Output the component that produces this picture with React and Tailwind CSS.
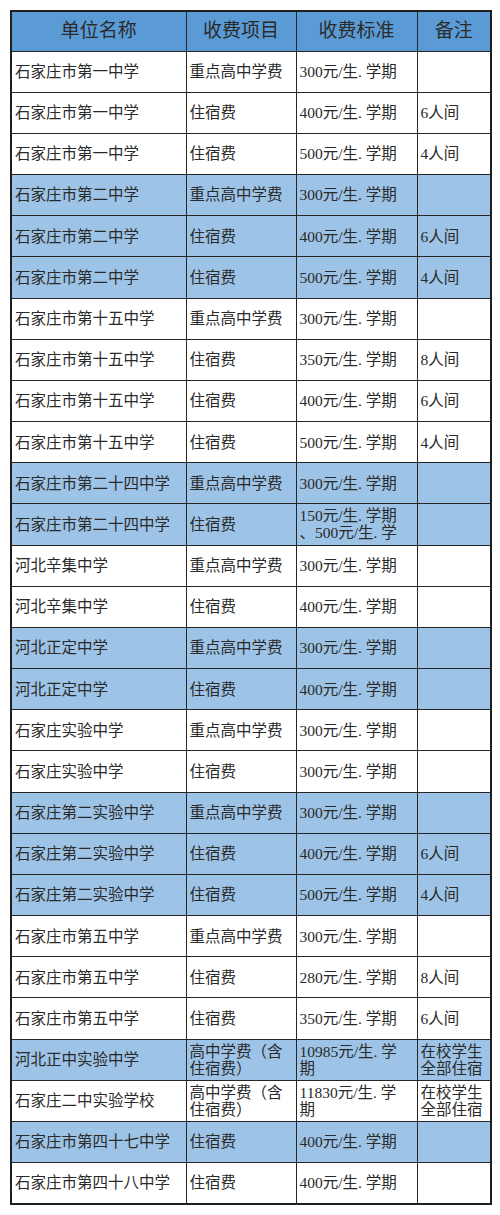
const BLUE = "bg-[#9dc3e6]";

const rows = [
  { name: "石家庄市第一中学", item: "重点高中学费", fee: "300元/生. 学期", note: "" },
  { name: "石家庄市第一中学", item: "住宿费", fee: "400元/生. 学期", note: "6人间" },
  { name: "石家庄市第一中学", item: "住宿费", fee: "500元/生. 学期", note: "4人间" },
  { name: "石家庄市第二中学", item: "重点高中学费", fee: "300元/生. 学期", note: "", blue: true },
  { name: "石家庄市第二中学", item: "住宿费", fee: "400元/生. 学期", note: "6人间", blue: true },
  { name: "石家庄市第二中学", item: "住宿费", fee: "500元/生. 学期", note: "4人间", blue: true },
  { name: "石家庄市第十五中学", item: "重点高中学费", fee: "300元/生. 学期", note: "" },
  { name: "石家庄市第十五中学", item: "住宿费", fee: "350元/生. 学期", note: "8人间" },
  { name: "石家庄市第十五中学", item: "住宿费", fee: "400元/生. 学期", note: "6人间" },
  { name: "石家庄市第十五中学", item: "住宿费", fee: "500元/生. 学期", note: "4人间" },
  { name: "石家庄市第二十四中学", item: "重点高中学费", fee: "300元/生. 学期", note: "", blue: true },
  { name: "石家庄市第二十四中学", item: "住宿费", fee: ["150元/生. 学期", "、500元/生. 学"], note: "", blue: true },
  { name: "河北辛集中学", item: "重点高中学费", fee: "300元/生. 学期", note: "" },
  { name: "河北辛集中学", item: "住宿费", fee: "400元/生. 学期", note: "" },
  { name: "河北正定中学", item: "重点高中学费", fee: "300元/生. 学期", note: "", blue: true },
  { name: "河北正定中学", item: "住宿费", fee: "400元/生. 学期", note: "", blue: true },
  { name: "石家庄实验中学", item: "重点高中学费", fee: "300元/生. 学期", note: "" },
  { name: "石家庄实验中学", item: "住宿费", fee: "300元/生. 学期", note: "" },
  { name: "石家庄第二实验中学", item: "重点高中学费", fee: "300元/生. 学期", note: "", blue: true },
  { name: "石家庄第二实验中学", item: "住宿费", fee: "400元/生. 学期", note: "6人间", blue: true },
  { name: "石家庄第二实验中学", item: "住宿费", fee: "500元/生. 学期", note: "4人间", blue: true },
  { name: "石家庄市第五中学", item: "重点高中学费", fee: "300元/生. 学期", note: "" },
  { name: "石家庄市第五中学", item: "住宿费", fee: "280元/生. 学期", note: "8人间" },
  { name: "石家庄市第五中学", item: "住宿费", fee: "350元/生. 学期", note: "6人间" },
  {
    name: "河北正中实验中学",
    item: ["高中学费（含", "住宿费）"],
    fee: ["10985元/生. 学", "期"],
    note: ["在校学生", "全部住宿"],
    blue: true,
  },
  {
    name: "石家庄二中实验学校",
    item: ["高中学费（含", "住宿费）"],
    fee: ["11830元/生. 学", "期"],
    note: ["在校学生", "全部住宿"],
  },
  { name: "石家庄市第四十七中学", item: "住宿费", fee: "400元/生. 学期", note: "", blue: true },
  { name: "石家庄市第四十八中学", item: "住宿费", fee: "400元/生. 学期", note: "" },
];

// multi-line cells come in as arrays
function Lines({ v }) {
  if (!Array.isArray(v)) return v;
  return v.map((l, i) => (
    <div key={i} className="leading-[17px] whitespace-nowrap">
      {l}
    </div>
  ));
}

const cell = "border border-[#262626] px-[3px] align-middle whitespace-nowrap overflow-hidden";

export default function App() {
  return (
    <div
      className="w-[500px] h-[1215px] bg-white pt-[10px] pl-[10px] text-[#2a2a2a]"
      style={{ fontFamily: '"Liberation Serif", "Noto Sans CJK SC", serif' }}
    >
      <table className="table-fixed border-collapse w-[480px] border-2 border-[#1f1f1f] text-[15.5px]">
        <colgroup>
          <col className="w-[175px]" />
          <col className="w-[110px]" />
          <col className="w-[121px]" />
          <col className="w-[74px]" />
        </colgroup>
        <thead>
          <tr className="h-[40px] bg-[#5b9bd5] text-[19px]">
            <th className={cell + " font-normal text-center"}>单位名称</th>
            <th className={cell + " font-normal text-center"}>收费项目</th>
            <th className={cell + " font-normal text-center"}>收费标准</th>
            <th className={cell + " font-normal text-center"}>备注</th>
          </tr>
        </thead>
        <tbody>
          {rows.map((r, i) => (
            <tr key={i} className={"h-[41.18px] " + (r.blue ? BLUE : "bg-white")}>
              <td className={cell}>{r.name}</td>
              <td className={cell}>
                <Lines v={r.item} />
              </td>
              <td className={cell}>
                <Lines v={r.fee} />
              </td>
              <td className={cell}>
                <Lines v={r.note} />
              </td>
            </tr>
          ))}
        </tbody>
      </table>
    </div>
  );
}
